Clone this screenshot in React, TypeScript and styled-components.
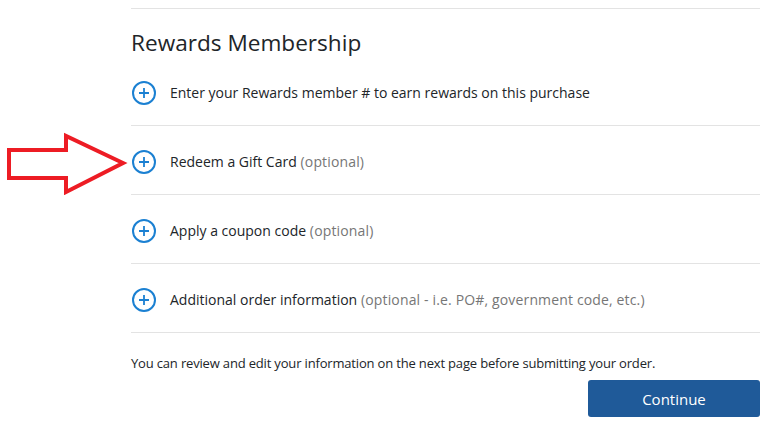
import React from "react";
import styled, { createGlobalStyle } from "styled-components";

const GlobalStyle = createGlobalStyle`
  body {
    margin: 0;
    background: #fff;
    font-family: "Open Sans", "Noto Sans", Arial, sans-serif;
    color: #212529;
  }
`;

interface RowItem {
  label: string;
  note?: string;
}

const rows: RowItem[] = [
  { label: "Enter your Rewards member # to earn rewards on this purchase" },
  { label: "Redeem a Gift Card", note: "(optional)" },
  { label: "Apply a coupon code", note: "(optional)" },
  {
    label: "Additional order information",
    note: "(optional - i.e. PO#, government code, etc.)",
  },
];

const PlusIcon: React.FC = () => (
  <IconWrap>
    <svg width="24" height="24" viewBox="0 0 24 24" fill="none">
      <circle cx="12" cy="12" r="11" stroke="#1b80d2" strokeWidth="2" />
      <path d="M12 7v10M7 12h10" stroke="#1b80d2" strokeWidth="1.8" />
    </svg>
  </IconWrap>
);

const App: React.FC = () => {
  return (
    <Page>
      <GlobalStyle />
      <Arrow width="132" height="70" viewBox="0 0 132 70">
        <path
          d="M9 25 L66 25 L66 11 L123 38 L66 67 L66 53 L9 53 Z"
          stroke="#ed1c24"
          strokeWidth="4"
          fill="none"
          strokeLinejoin="miter"
        />
      </Arrow>
      <Section>
        <Heading>Rewards Membership</Heading>
        {rows.map((row) => (
          <Row key={row.label}>
            <PlusIcon />
            <Label>
              {row.label}
              {row.note && <Note> {row.note}</Note>}
            </Label>
          </Row>
        ))}
        <Footer>
          You can review and edit your information on the next page before
          submitting your order.
        </Footer>
        <Actions>
          <ContinueButton>Continue</ContinueButton>
        </Actions>
      </Section>
    </Page>
  );
};

const Page = styled.div`
  position: relative;
  width: 781px;
  height: 435px;
  overflow: hidden;
  padding-top: 8px;
  box-sizing: border-box;
`;

const Arrow = styled.svg`
  position: absolute;
  left: 0;
  top: 125px;
`;

const Section = styled.div`
  margin-left: 131px;
  width: 629px;
  border-top: 1px solid #e3e3e3;
`;

const Heading = styled.h2`
  margin: 21px 0 1px;
  font-size: 22.6px;
  line-height: 26px;
  font-weight: 400;
  color: #212529;
`;

const Row = styled.div`
  display: flex;
  align-items: center;
  gap: 14px;
  padding: 24px 0 20px 1px;
  border-bottom: 1px solid #e3e3e3;
`;

const IconWrap = styled.span`
  display: flex;
  width: 24px;
  height: 24px;
  flex-shrink: 0;
`;

const Label = styled.span`
  font-size: 14px;
  line-height: 24px;
  color: #212529;
`;

const Note = styled.span`
  color: #767676;
  letter-spacing: 0.15px;
`;

const Footer = styled.p`
  margin: 21px 0 0;
  font-size: 13px;
  line-height: 18px;
  letter-spacing: -0.17px;
  color: #212529;
`;

const Actions = styled.div`
  display: flex;
  justify-content: flex-end;
  margin-top: 8px;
`;

const ContinueButton = styled.button`
  width: 172px;
  height: 37px;
  border: none;
  border-radius: 3px;
  background: #1f5a99;
  color: #fff;
  font-family: inherit;
  font-size: 15px;
  cursor: pointer;
`;

export default App;
